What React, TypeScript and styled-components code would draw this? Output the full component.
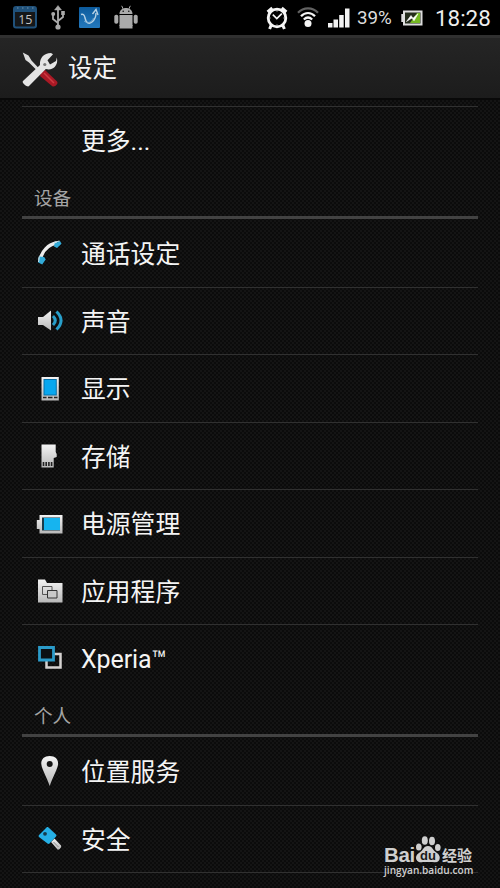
import React from 'react';
import styled, { createGlobalStyle } from 'styled-components';

const Global = createGlobalStyle`
  * { box-sizing: border-box; }
  body { margin: 0; background: #0d0d0d; }
`;

const Screen = styled.main`
  position: relative;
  display: flex;
  flex-direction: column;
  width: 500px;
  height: 888px;
  overflow: hidden;
  color: #f4f4f4;
  font-family: Roboto, "Noto Sans CJK SC", sans-serif;
  background-color: #0b0b0b;
  background-image:
    linear-gradient(45deg, #141414 25%, transparent 25%, transparent 75%, #141414 75%),
    linear-gradient(45deg, #141414 25%, transparent 25%, transparent 75%, #141414 75%);
  background-size: 4px 4px;
  background-position: 0 0, 2px 2px;
`;

const StatusBar = styled.header`
  display: flex;
  align-items: center;
  height: 35px;
  flex: none;
  padding: 0 10px 0 13px;
  background: #000;
`;

const Tray = styled.div<{ $gap: number }>`
  display: flex;
  align-items: center;
  gap: ${p => p.$gap}px;
`;

const Spacer = styled.div`
  flex: 1;
`;

const Percent = styled.span`
  width: 36px;
  margin: 1px 8px 0 7px;
  font-size: 18.8px;
  line-height: 24px;
  color: #ddd;
  white-space: nowrap;
`;

const Clock = styled.span`
  width: 55px;
  margin: 1px 0 0 12px;
  font-size: 22.4px;
  line-height: 26px;
  color: #eee;
  white-space: nowrap;
`;

const TitleBar = styled.div`
  display: flex;
  align-items: center;
  flex: none;
  height: 65px;
  padding: 2px 0 0 22px;
  gap: 9px;
  background: linear-gradient(#252525, #1c1c1c);
  border-top: 3px solid #303030;
  border-bottom: 2px solid #090909;
`;

const Title = styled.h1`
  margin: 0;
  font-size: 24.5px;
  font-weight: 400;
  line-height: 36px;
`;

const List = styled.section`
  margin: 6px 22px 0;
  border-top: 1px solid #303030;
`;

const Row = styled.div<{ $h: number; $last?: boolean }>`
  display: grid;
  grid-template-columns: 59px 1fr;
  align-items: center;
  height: ${p => p.$h}px;
  border-bottom: 1px solid ${p => (p.$last ? 'transparent' : '#303030')};
  svg { margin-left: 12px; }
`;

const Label = styled.span`
  grid-column: 2;
  padding-top: 3px;
  font-size: 24.8px;
  line-height: 36px;
  white-space: nowrap;
`;

const LatinLabel = styled(Label)`
  font-size: 25px;
  letter-spacing: -0.1px;
`;

const SectionTitle = styled.h2<{ $h: number }>`
  display: flex;
  align-items: flex-end;
  height: ${p => p.$h}px;
  margin: 0;
  padding: 0 12px 4px;
  border-bottom: 3px solid #424242;
  color: #a4a4a4;
  font-size: 18.6px;
  font-weight: 400;
  line-height: 26px;
`;

const Watermark = styled.aside`
  position: absolute;
  left: 384px;
  top: 834px;
  display: grid;
  grid-template-rows: 29px 14px;
  width: 92px;
  color: #cfcfcf;
`;

const Brand = styled.div`
  display: flex;
  align-items: flex-end;
  height: 29px;
`;

const BrandLatin = styled.span`
  width: 31px;
  height: 18px;
  font: 700 20.5px/20px "Liberation Sans", sans-serif;
  letter-spacing: -0.3px;
`;

const BrandHan = styled.span`
  height: 17px;
  margin-left: 1px;
  font: 700 15px/17px "Noto Sans CJK SC", sans-serif;
  white-space: nowrap;
`;

const Site = styled.div`
  padding-top: 1px;
  font: 600 10.1px/12px "Open Sans", sans-serif;
  white-space: nowrap;
`;

const Gradients = () => (
  <svg width="0" height="0" style={{ position: 'absolute' }}>
    <defs>
      <linearGradient id="silver" x1="0" y1="0" x2="0" y2="1">
        <stop offset="0" stopColor="#f4f4f4" />
        <stop offset="1" stopColor="#b8b8b8" />
      </linearGradient>
      <linearGradient id="blue" x1="0" y1="0" x2="0" y2="1">
        <stop offset="0" stopColor="#0c5a9c" />
        <stop offset="1" stopColor="#2479bd" />
      </linearGradient>
    </defs>
  </svg>
);

const CalendarIcon = () => (
  <svg width="24" height="23" viewBox="0 0 24 23">
    <rect x="1" y="1" width="22" height="20.5" rx="2" fill="#151719" stroke="#20517a" strokeWidth="2" />
    <path d="M1 2h22v4H1z" fill="#20517a" />
    <path d="M4 2h1.500M9 2h1.500M14 2h1.500M19 2h1.500" stroke="#7194ad" />
    <text x="12.300" y="18" textAnchor="middle" fontFamily="Open Sans" fontSize="12.500" fill="#c4c4c4">15</text>
  </svg>
);

const UsbIcon = () => (
  <svg width="14" height="25" viewBox="0 0 14 25" fill="#aaa" stroke="#aaa">
    <path d="M7 3v19M7 18l-5-4V9M7 16l5-4V8" fill="none" strokeWidth="1.800" />
    <path d="M7 .500 10.500 5h-7z" strokeWidth=".500" />
    <circle cx="7" cy="22" r="2.600" stroke="none" />
    <circle cx="2.200" cy="9" r="2" stroke="none" />
    <path d="M10.200 6h3.600v4h-3.600z" stroke="none" />
  </svg>
);

const SyncIcon = () => (
  <svg width="21" height="21" viewBox="0 0 21 21">
    <rect width="21" height="21" rx="1" fill="url(#blue)" />
    <path d="M2 7.500C4 6.500 5.500 8 6 11c1 5 4 6.500 7 4 3-2.500 4-5 4-9" fill="none" stroke="#b7d2e5" strokeWidth="1.400" />
    <path d="M5 14c4 3 8 1 9.500-3" fill="none" stroke="#7fb1d6" strokeWidth=".800" />
    <path d="m13.500 7 3.500-4.500L19 8" fill="none" stroke="#b7d2e5" strokeWidth="1.400" />
  </svg>
);

const AndroidIcon = () => (
  <svg width="24" height="25" viewBox="0 0 24 25" fill="#aaa">
    <path d="M5.500 9c0-8 13-8 13 0zM5.500 10h13v11h-13z" />
    <path d="M7.700.800 9.200 4M16.300.800 14.800 4" stroke="#aaa" strokeWidth="1" />
    <rect x=".300" y="9.700" width="4" height="9" rx="1.800" />
    <rect x="19.700" y="9.700" width="4" height="9" rx="1.800" />
    <path d="M5.500 20h13v3.500h-13z" />
    <circle cx="9.200" cy="6.200" r=".800" fill="#111" />
    <circle cx="14.800" cy="6.200" r=".800" fill="#111" />
  </svg>
);

const AlarmIcon = () => (
  <svg width="22" height="24" viewBox="0 0 22 24" fill="none" stroke="#f5f5f5">
    <circle cx="11" cy="12" r="8.800" strokeWidth="2.800" />
    <path d="m1.600 6 4.700-4M20.400 6l-4.700-4M5.300 19l-1.700 4M16.700 19l1.700 4" strokeWidth="3" />
    <path d="m6.800 8.600 4 4 5-5" strokeWidth="1.600" />
    <path d="M11 4.500v1M11 18.500v1M3.500 12h1M17.500 12h1" />
  </svg>
);

const WifiIcon = () => (
  <svg width="22" height="21" viewBox="0 0 22 21" fill="none">
    <path d="M1 5.800C6.500-.200 15.500-.200 21 5.800" stroke="#626262" strokeWidth="2.200" />
    <path d="M4 9.300c4-4.400 10-4.400 14 0M6.800 12.500c2.600-2.500 5.800-2.500 8.400 0" stroke="#f5f5f5" strokeWidth="2.200" />
    <circle cx="11" cy="16.500" r="3.500" fill="#f5f5f5" />
  </svg>
);

const SignalIcon = () => (
  <svg width="22" height="20" viewBox="0 0 22 20" fill="#f3f3f3">
    <path d="M0 15h4.500v4.500H0zM5.500 11.500H10v8H5.500zM11.200 7h4.500v12.500h-4.500zM17 .500h4.500v19H17z" />
  </svg>
);

const ChargeIcon = () => (
  <svg width="22" height="16" viewBox="0 0 22 16">
    <path d="M2 .500h19.500v15H2V12H.300V4H2z" fill="#ddd" />
    <path d="M4 2.500h15.500v11H4z" fill="#242c1c" />
    <path d="M16 3h3v10H9z" fill="#74b922" />
    <path d="M5.500 11.500 10 5.500l2 2.800L17 3.800l-4 7-2-2.800z" fill="#fff" stroke="#fff" strokeWidth=".600" />
  </svg>
);

const ToolsIcon = () => (
  <svg width="37" height="37" viewBox="0 0 37 37">
    <path d="m.800 1.500 5.700 3 3 5 9.500 10-2 2L7 11.500 3.500 9z" fill="#ddd" />
    <path d="m19 22 4-3 12 11.500c2 2-2.500 6.500-5 4.500L18 25z" fill="#a91925" />
    <path d="m22 22 10 10" stroke="#cf3a42" strokeWidth="1.500" />
    <path d="M1 30 18 14c-.500-6 3-12 11-12l2 1.200-5.500 6 2.500 4.300 6-3.500.800-3.500c2 8-4 13.500-11 11.500L7 35c-1 2-8-3-6-5z" fill="#e4e4e4" />
    <circle cx="22.800" cy="13.500" r="1.600" fill="#777" />
  </svg>
);

type IconName = 'phone' | 'sound' | 'display' | 'storage' | 'power' | 'apps' | 'xperia' | 'pin' | 'key';

const drawings: Record<IconName, React.ReactNode> = {
  phone: <>
    <path d="M4 22C6 13 12.500 6.500 21 4.800" fill="none" stroke="#ececec" strokeWidth="3.600" />
    <path d="m18.500 5.500 5.500-2.500 1.500 2.800-4.500 4.200-3-1.500zM3 18.500l5.200.500 1.500 2.500-3.500 5-4-2z" fill="#32aad7" />
    <path d="m18 4.500 5.500-1.500M3.300 18.500 2.500 24" stroke="#c3dfe9" strokeWidth="1.200" />
  </>,
  sound: <>
    <path d="M2 11h5l8-6.500v20L7 19H2z" fill="url(#silver)" />
    <path d="M17 10c3 3 3 6 0 9M20.500 5.500c6 6 6 12 0 18" fill="none" stroke="#289fca" strokeWidth="3" />
  </>,
  display: <>
    <path d="M5.500 3h17.300v23.500H5.500z" fill="url(#silver)" />
    <path d="M7.500 5h13.300v16.500H7.500z" fill="#0870a8" />
    <path d="M8.500 6h11.300v14.500H8.500z" fill="#08a7ef" />
    <path d="M7 23.500h3.500M12 23.500h4.500M18 23.500h3.500" stroke="#222" strokeWidth="1.500" />
  </>,
  storage: <>
    <path d="M5.500 3.500h14.200V11l1 2v3l-3 1v9.500H5.500z" fill="url(#silver)" />
    <path d="M7.500 21v4M10.200 21v4M12.900 21v4M15.600 21v4" stroke="#222" strokeWidth="1.600" />
  </>,
  power: <>
    <path d="M3.500 6h23v18.500h-23V20H.800v-9h2.700z" fill="url(#silver)" />
    <path d="M6 8.500h18v13H6z" fill="#1a3b4a" />
    <path d="M8 9h16v12H8z" fill="#16b4ef" />
  </>,
  apps: <>
    <path d="M2 3.500h7L11 7h15.500v19.500H2z" fill="url(#silver)" />
    <path d="M6.500 10.500h9.500v8H6.500z" fill="none" stroke="#555" />
    <path d="M11.500 14.500H21v7.500h-9.500z" fill="#c8c8c8" stroke="#333" />
  </>,
  xperia: <>
    <path d="M10.500 11h14v13.500h-14z" fill="none" stroke="#d5d2d1" strokeWidth="2.500" />
    <path d="M3.500 4.500h14v12.500h-14z" fill="#0b1115" stroke="#2b9bc9" strokeWidth="2.800" />
  </>,
  pin: <>
    <path d="M13.700 0C8 0 5 3.500 5.300 8c.300 5 5.500 13 8.400 22 2.900-9 8.100-17 8.400-22 .300-4.500-2.700-8-8.400-8z" fill="url(#silver)" />
    <circle cx="13.700" cy="8" r="3" fill="#151515" />
  </>,
  key: <>
    <path d="m15 18 3.500-3.500 6.500 7c1 1.500-2 5-3.500 4z" fill="url(#silver)" />
    <path d="m17.500 18 5 5" stroke="#888" strokeWidth="1" />
    <path d="m12.500 3.500 7.500 7c1 1 0 2 0 2l-6.500 7c-1 1-2 0-2 0L3 13c-1-1 0-2 0-2l7.500-7.500c1-1 2 0 2 0z" fill="#25b0e6" />
    <circle cx="9" cy="9.800" r="1.900" fill="#163c4c" />
  </>,
};

const Glyph = ({ name }: { name: IconName }) => (
  <svg width="31" height="30" viewBox="-2 0 31 30">{drawings[name]}</svg>
);

const Paw = () => (
  <svg width="26" height="28" viewBox="0 0 26 28" fill="#cfcfcf">
    <ellipse cx="3.800" cy="12" rx="2.800" ry="3.500" />
    <ellipse cx="9.800" cy="5.500" rx="3" ry="4.300" />
    <ellipse cx="17" cy="6" rx="3" ry="4.300" />
    <ellipse cx="22.800" cy="12.500" rx="2.800" ry="3.500" />
    <path d="M13 11c-5 0-4 4-9 7-6 4-2 11 4 9h10c7 2 9-6 4-9-5-3-4-7-9-7z" />
    <text x="13" y="24.500" textAnchor="middle" fontFamily="Liberation Sans" fontSize="13" fontWeight="700" fill="#191919">du</text>
  </svg>
);

const device: { icon: IconName; text: string; h: number }[] = [
  { icon: 'phone', text: '通话设定', h: 69 },
  { icon: 'sound', text: '声音', h: 67 },
  { icon: 'display', text: '显示', h: 68 },
  { icon: 'storage', text: '存储', h: 67 },
  { icon: 'power', text: '电源管理', h: 68 },
  { icon: 'apps', text: '应用程序', h: 67 },
];

export default function App() {
  return (
    <Screen>
      <Global />
      <Gradients />
      <StatusBar>
        <Tray $gap={14}><CalendarIcon /><UsbIcon /><SyncIcon /><AndroidIcon /></Tray>
        <Spacer />
        <Tray $gap={9}><AlarmIcon /><WifiIcon /><SignalIcon /></Tray>
        <Percent>39%</Percent>
        <ChargeIcon />
        <Clock>18:28</Clock>
      </StatusBar>
      <TitleBar><ToolsIcon /><Title>设定</Title></TitleBar>
      <List>
        <Row $h={67} $last><Label>更多...</Label></Row>
        <SectionTitle $h={45}>设备</SectionTitle>
        {device.map(r => (
          <Row key={r.icon} $h={r.h}><Glyph name={r.icon} /><Label>{r.text}</Label></Row>
        ))}
        <Row $h={67} $last><Glyph name="xperia" /><LatinLabel>Xperia™</LatinLabel></Row>
        <SectionTitle $h={45}>个人</SectionTitle>
        <Row $h={69}><Glyph name="pin" /><Label>位置服务</Label></Row>
        <Row $h={67}><Glyph name="key" /><Label>安全</Label></Row>
      </List>
      <Watermark>
        <Brand><BrandLatin>Bai</BrandLatin><Paw /><BrandHan>经验</BrandHan></Brand>
        <Site>jingyan.baidu.com</Site>
      </Watermark>
    </Screen>
  );
}
